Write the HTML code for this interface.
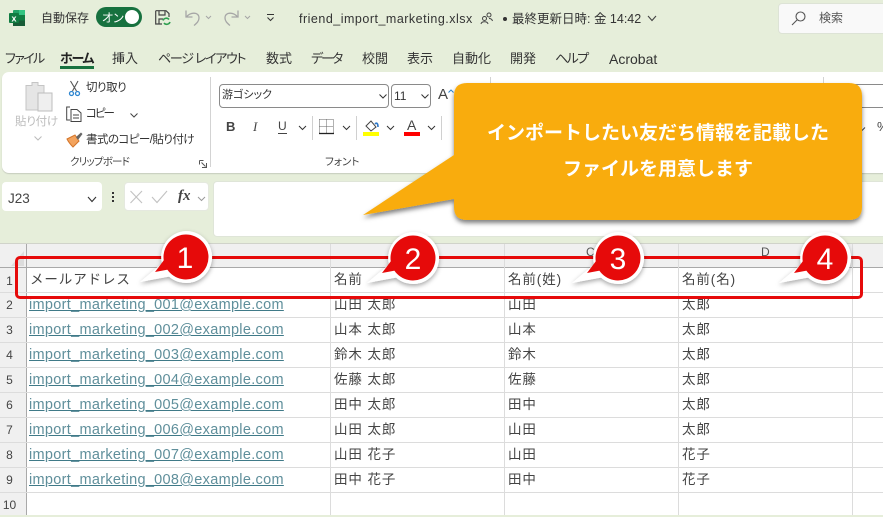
<!DOCTYPE html>
<html lang="ja"><head><meta charset="utf-8"><title>friend_import_marketing.xlsx</title>
<style>
html,body{margin:0;padding:0}
body{width:883px;height:515px;overflow:hidden;position:relative;background:#e6eeda;font-family:"Liberation Sans","Noto Sans CJK JP",sans-serif;color:#333}
.t{position:absolute;white-space:nowrap;line-height:20px;height:20px}
.b{position:absolute;box-sizing:border-box}
.tab{font-size:13px;top:49px;color:#333;font-feature-settings:"palt"}
.rb{font-size:11.5px;color:#333;font-feature-settings:"palt"}
.cell{font-size:13.5px;color:#444;letter-spacing:.9px;line-height:24px;height:24px}
.mail{font-size:14.5px;color:#5f8f9b;text-decoration:underline;text-decoration-color:#3f7a88;letter-spacing:.3px;line-height:24px;height:24px;left:29px}
.rh{position:absolute;left:0;width:19px;text-align:center;font-size:12px;color:#444;line-height:24px;height:24px;box-sizing:border-box}
svg{position:absolute;overflow:visible}
</style></head><body>

<!-- title bar -->
<svg style="left:9px;top:10px" width="17" height="16" viewBox="0 0 17 16"><rect x="4" y="0" width="12" height="16" rx="1" fill="#21a366"/><rect x="10" y="0" width="6" height="5" fill="#33c481"/><rect x="4" y="10.500" width="12" height="5.500" fill="#185c37"/><rect x="10" y="5" width="6" height="5.500" fill="#107c41"/><rect x="0" y="3" width="10" height="10" rx="1" fill="#107c41"/><text x="5" y="11.500" font-size="9" font-weight="700" fill="#fff" text-anchor="middle" font-family="Liberation Sans">x</text></svg>
<div class="t" style="left:41px;top:8px;font-size:12px;color:#333">自動保存</div>
<div class="b" style="left:96px;top:7px;width:46px;height:20px;border-radius:10px;background:#17713f"></div>
<div class="t" style="left:102px;top:8px;font-size:12px;color:#fff;font-feature-settings:'palt'">オン</div>
<div class="b" style="left:125px;top:10px;width:14px;height:14px;border-radius:50%;background:#fff"></div>
<svg style="left:155px;top:10px" width="17" height="16" viewBox="0 0 17 16" fill="none"><path d="M.7.7H11L14 3.500V7M.7.7V14H7M4 .7V5H10V.7M4 14V9H8" stroke="#444" stroke-width="1.200"/><path d="M8 10.500A3.500 3.500 0 0 1 14 9.500M15 12A3.500 3.500 0 0 1 9 13" stroke="#2f9e4f" stroke-width="1.600"/></svg>
<svg style="left:185px;top:9px" width="46" height="18" viewBox="0 0 46 18" fill="none" stroke="#a6a6a6" stroke-width="1.300"><path d="M1 1.500V8H7.500M1.500 8C5 3 14 2.500 14 9C14 12 12 14 9 16.500"/><path d="M21 7L23.500 9.500L26 7" stroke-width="1"/></svg>
<svg style="left:224px;top:9px" width="46" height="18" viewBox="0 0 46 18" fill="none" stroke="#a6a6a6" stroke-width="1.300"><path d="M14 1.500V8H7.500M13.500 8C10 3 1 2.500 1 9C1 12 3 14 6 16.500"/><path d="M21 7L23.500 9.500L26 7" stroke-width="1"/></svg>
<svg style="left:266px;top:14px" width="9" height="8" viewBox="0 0 9 8" fill="none" stroke="#333"><path d="M1 .5H8M1.500 3.500L4.500 6.500L7.500 3.500"/></svg>
<div class="t" style="left:299px;top:9px;font-size:12.500px;letter-spacing:.5px;color:#333">friend_import_marketing.xlsx</div>
<svg style="left:480px;top:12px" width="13" height="13" viewBox="0 0 13 13" fill="none" stroke="#444"><circle cx="9" cy="3" r="2"/><circle cx="4.500" cy="6.500" r="2"/><path d="M1 12C1.500 9 7.500 9 8 12M9 6.500C10.500 6.500 12 7 12.500 9"/></svg>
<div class="b" style="left:503px;top:17px;width:4px;height:4px;border-radius:50%;background:#333"></div>
<div class="t" style="left:512px;top:9px;font-size:12.500px;color:#333">最終更新日時: 金 14:42</div>
<svg style="left:647px;top:15px" width="10" height="7" viewBox="0 0 10 7" fill="none" stroke="#444" stroke-width="1.100"><path d="M1 1L5 5.500L9 1"/></svg>
<div class="b" style="left:778px;top:3px;width:110px;height:31px;border-radius:4px;background:#f9f9f9;border:1px solid #dde3d6"></div>
<svg style="left:791px;top:11px" width="15" height="15" viewBox="0 0 15 15" fill="none" stroke="#555" stroke-width="1.100"><circle cx="9.500" cy="5.500" r="4.500"/><path d="M6 9L1 14"/></svg>
<div class="t" style="left:819px;top:8px;font-size:12px;color:#555">検索</div>

<!-- tabs -->
<div class="t tab" style="left:5px;letter-spacing:-1.600px">ファイル</div>
<div class="t tab" style="left:60px;font-weight:700;color:#222;letter-spacing:-1.300px">ホーム</div>
<div class="b" style="left:60px;top:66px;width:34px;height:3px;background:#17713f"></div>
<div class="t tab" style="left:112px">挿入</div>
<div class="t tab" style="left:158px;letter-spacing:-1.300px">ページ レイアウト</div>
<div class="t tab" style="left:266px">数式</div>
<div class="t tab" style="left:311px;letter-spacing:-2px">データ</div>
<div class="t tab" style="left:362px">校閲</div>
<div class="t tab" style="left:407px">表示</div>
<div class="t tab" style="left:452px">自動化</div>
<div class="t tab" style="left:510px">開発</div>
<div class="t tab" style="left:555px;letter-spacing:-1.600px">ヘルプ</div>
<div class="t tab" style="left:609px;font-size:14px">Acrobat</div>

<!-- ribbon -->
<div class="b" style="left:2px;top:72px;width:890px;height:101px;border-radius:7px;background:#fff;box-shadow:0 1px 1px #c6ccbe"></div>
<div class="b" style="left:210px;top:77px;width:1px;height:90px;background:#d3d3d3"></div>
<div class="b" style="left:490px;top:77px;width:1px;height:90px;background:#d3d3d3"></div>
<div class="b" style="left:823px;top:77px;width:1px;height:90px;background:#d3d3d3"></div>
<svg style="left:25px;top:81px" width="28" height="31" viewBox="0 0 28 31"><path d="M1 4.500H7V1.500H13V4.500H19V29H1Z" fill="#e5e5e5" stroke="#c5c5c5"/><rect x="13" y="12" width="14" height="18" fill="#efefef" stroke="#bdbdbd"/></svg>
<div class="t" style="left:15px;top:112px;font-size:11.500px;color:#bcbcbc;letter-spacing:-.2px;font-feature-settings:'palt'">貼り付け</div>
<svg style="left:34px;top:136px" width="8" height="5" viewBox="0 0 8 5" fill="none" stroke="#bbb"><path d="M.5.5L4 4L7.500.5"/></svg>
<svg style="left:68px;top:80px" width="13" height="17" viewBox="0 0 13 17" fill="none"><path d="M2.500 1L8.500 11M10 1L4.500 11" stroke="#555" stroke-width="1.100"/><circle cx="3.500" cy="13.500" r="2" stroke="#2e86d0" stroke-width="1.300"/><circle cx="9.500" cy="13.500" r="2" stroke="#2e86d0" stroke-width="1.300"/></svg>
<div class="t rb" style="left:86px;top:78px;letter-spacing:-.5px">切り取り</div>
<svg style="left:66px;top:106px" width="16" height="16" viewBox="0 0 16 16" fill="none" stroke="#444"><path d="M4 1H.7V14H4M5 3.500H11L15 7V15.500H5ZM7 9H13M7 12H13"/></svg>
<div class="t rb" style="left:86px;top:104px;letter-spacing:-2px">コピー</div>
<svg style="left:130px;top:113px" width="8" height="5" viewBox="0 0 8 5" fill="none" stroke="#444"><path d="M.5.500L4 4L7.500.5"/></svg>
<svg style="left:66px;top:132px" width="17" height="16" viewBox="0 0 17 16"><path d="M1 7L9 3L13 9L7 15C5 13 2 9 1 7Z" fill="#f3a35d" stroke="#d4752a"/><path d="M10 5L15 0.500L16.500 2L12 8Z" fill="#666"/></svg>
<div class="t rb" style="left:86px;top:130px;letter-spacing:-.55px">書式のコピー/貼り付け</div>
<div class="t" style="left:70px;top:152px;font-size:10.500px;color:#444;letter-spacing:-.8px;font-feature-settings:'palt'">クリップボード</div>
<svg style="left:199px;top:160px" width="8" height="8" viewBox="0 0 8 8" fill="none" stroke="#555"><path d="M7.500 3V7.500H3M.5.500H4.500M.5.500V4.500M2.500 2.500L6.500 6.500"/></svg>

<div class="b" style="left:219px;top:84px;width:170px;height:24px;border:1px solid #8a8a8a;border-radius:4px"></div>
<div class="t" style="left:222px;top:85px;font-size:11px;color:#333;font-feature-settings:'palt'">游ゴシック</div>
<svg style="left:379px;top:94px" width="8" height="5" viewBox="0 0 8 5" fill="none" stroke="#333"><path d="M.5.500L4 4L7.500.5"/></svg>
<div class="b" style="left:391px;top:84px;width:40px;height:24px;border:1px solid #8a8a8a;border-radius:4px"></div>
<div class="t" style="left:394px;top:86px;font-size:12px">11</div>
<svg style="left:421px;top:94px" width="8" height="5" viewBox="0 0 8 5" fill="none" stroke="#333"><path d="M.5.500L4 4L7.500.5"/></svg>
<div class="t" style="left:438px;top:85px;font-size:15px;color:#444">A</div>
<svg style="left:448px;top:89px" width="6" height="4" viewBox="0 0 6 4" fill="none" stroke="#2e86d0"><path d="M.5 3.500L3 1L5.500 3.500"/></svg>

<div class="t" style="left:226px;top:117px;font-size:13px;font-weight:700;color:#444">B</div>
<div class="t" style="left:253px;top:117px;font-size:13px;font-style:italic;font-family:'Liberation Serif',serif;color:#444">I</div>
<div class="t" style="left:278px;top:116px;font-size:12px;color:#444">U</div>
<div class="b" style="left:278px;top:133px;width:9px;height:1px;background:#444"></div>
<svg style="left:298px;top:125px" width="9" height="6" viewBox="0 0 9 6" fill="none" stroke="#333"><path d="M1 1L4.500 4.500L8 1"/></svg>
<div class="b" style="left:312px;top:116px;width:1px;height:24px;background:#d0d0d0"></div>
<svg style="left:319px;top:119px" width="15" height="16" viewBox="0 0 15 16" fill="none"><path d="M.5.500H14.500V14M.5.500V14M7.500.500V14M.5 7.500H14.500" stroke="#666" stroke-dasharray="1 1"/><path d="M0 14.500H15" stroke="#222" stroke-width="1.300"/></svg>
<svg style="left:342px;top:125px" width="9" height="6" viewBox="0 0 9 6" fill="none" stroke="#333"><path d="M1 1L4.500 4.500L8 1"/></svg>
<div class="b" style="left:356px;top:116px;width:1px;height:24px;background:#d0d0d0"></div>
<svg style="left:365px;top:120px" width="14" height="13" viewBox="0 0 14 13" fill="none"><path d="M1 6L6 1L11 7L6 11Z" stroke="#444"/><path d="M10 4C12 2 13 4 13 7" stroke="#2e78c8" stroke-width="1.600"/></svg>
<div class="b" style="left:363px;top:132px;width:16px;height:4px;background:#ffff00"></div>
<svg style="left:386px;top:125px" width="9" height="6" viewBox="0 0 9 6" fill="none" stroke="#333"><path d="M1 1L4.500 4.500L8 1"/></svg>
<div class="t" style="left:407px;top:115px;font-size:14px;color:#444">A</div>
<div class="b" style="left:404px;top:132px;width:16px;height:4px;background:#ff0000"></div>
<svg style="left:427px;top:125px" width="9" height="6" viewBox="0 0 9 6" fill="none" stroke="#333"><path d="M1 1L4.500 4.500L8 1"/></svg>
<div class="b" style="left:441px;top:116px;width:1px;height:24px;background:#d0d0d0"></div>
<div class="t" style="left:325px;top:152px;font-size:10.500px;color:#444;font-feature-settings:'palt'">フォント</div>
<div class="b" style="left:840px;top:84px;width:60px;height:24px;border:1px solid #8a8a8a"></div>
<svg style="left:862px;top:127px" width="6" height="4" viewBox="0 0 6 4" fill="none" stroke="#444"><path d="M0 3.500L3 .5"/></svg>
<div class="t" style="left:877px;top:117px;font-size:13px;color:#444">%</div>

<!-- formula bar -->
<div class="b" style="left:2px;top:182px;width:100px;height:29px;border-radius:4px;background:#fff"></div>
<div class="t" style="left:8px;top:189px;font-size:13.500px;color:#444">J23</div>
<svg style="left:87px;top:196px" width="10" height="7" viewBox="0 0 10 7" fill="none" stroke="#333" stroke-width="1.100"><path d="M1 1L5 5.500L9 1"/></svg>
<div class="b" style="left:112px;top:192px;width:2px;height:2px;background:#333;box-shadow:0 4px #333,0 8px #333"></div>
<div class="b" style="left:124px;top:182px;width:85px;height:29px;border-radius:4px;background:#fff;border:1px solid #e5e9df"></div>
<svg style="left:130px;top:190px" width="40" height="14" viewBox="0 0 40 14" fill="none" stroke="#c2c2c2" stroke-width="1.100"><path d="M.5 1L12 13M12 1L.5 13M22 7L27 12.500L37 1"/></svg>
<div class="t" style="left:178px;top:186px;font-family:'Liberation Serif',serif;font-style:italic;font-weight:700;font-size:15px;color:#444">fx</div>
<svg style="left:197px;top:196px" width="9" height="6" viewBox="0 0 9 6" fill="none" stroke="#999"><path d="M1 1L4.500 4.500L8 1"/></svg>
<div class="b" style="left:213px;top:181px;width:680px;height:56px;border-radius:4px;background:#fff;border:1px solid #dfe5d8"></div>

<!-- grid -->
<div class="b" style="left:0;top:244px;width:883px;height:271px;background:#fff"></div>
<div class="b" style="left:0;top:244px;width:883px;height:23px;background:#f0f0f0"></div>
<div class="b" style="left:0;top:267px;width:26px;height:248px;background:#f0f0f0"></div>
<div class="b" style="left:0;top:243px;width:883px;height:1px;background:#d0d3ca"></div>
<svg style="left:11px;top:251px" width="13" height="15"><path d="M13 0V15H0Z" fill="#dcdcdc"/></svg>
<div class="b" style="left:0;top:267px;width:883px;height:1px;background:#a9a9a9"></div>
<div class="b" style="left:26px;top:244px;width:1px;height:271px;background:#a9a9a9"></div>
<div class="b" style="left:330px;top:244px;width:1px;height:271px;background:#dcdcdc"></div>
<div class="b" style="left:504px;top:244px;width:1px;height:271px;background:#dcdcdc"></div>
<div class="b" style="left:678px;top:244px;width:1px;height:271px;background:#dcdcdc"></div>
<div class="b" style="left:852px;top:244px;width:1px;height:271px;background:#dcdcdc"></div>
<div class="b" style="left:0;top:292px;width:883px;height:1px;background:#dcdcdc"></div>
<div class="b" style="left:0;top:317px;width:883px;height:1px;background:#dcdcdc"></div>
<div class="b" style="left:0;top:342px;width:883px;height:1px;background:#dcdcdc"></div>
<div class="b" style="left:0;top:367px;width:883px;height:1px;background:#dcdcdc"></div>
<div class="b" style="left:0;top:392px;width:883px;height:1px;background:#dcdcdc"></div>
<div class="b" style="left:0;top:417px;width:883px;height:1px;background:#dcdcdc"></div>
<div class="b" style="left:0;top:442px;width:883px;height:1px;background:#dcdcdc"></div>
<div class="b" style="left:0;top:467px;width:883px;height:1px;background:#dcdcdc"></div>
<div class="b" style="left:0;top:492px;width:883px;height:1px;background:#dcdcdc"></div>
<div class="t" style="left:586px;top:242px;font-size:12px;color:#555">C</div>
<div class="t" style="left:761px;top:242px;font-size:12px;color:#555">D</div>

<div class="rh" style="top:269px">1</div><div class="rh" style="top:293px">2</div><div class="rh" style="top:318px">3</div><div class="rh" style="top:343px">4</div><div class="rh" style="top:368px">5</div><div class="rh" style="top:393px">6</div><div class="rh" style="top:418px">7</div><div class="rh" style="top:443px">8</div><div class="rh" style="top:468px">9</div><div class="rh" style="top:493px">10</div>

<div class="t cell" style="left:30px;top:268px">メールアドレス</div>
<div class="t cell" style="left:334px;top:268px">名前</div>
<div class="t cell" style="left:508px;top:268px">名前(姓)</div>
<div class="t cell" style="left:682px;top:268px">名前(名)</div>

<div class="t mail" style="top:293px">import_marketing_001@example.com</div><div class="t cell" style="left:334px;top:293px">山田 太郎</div><div class="t cell" style="left:508px;top:293px">山田</div><div class="t cell" style="left:682px;top:293px">太郎</div>
<div class="t mail" style="top:318px">import_marketing_002@example.com</div><div class="t cell" style="left:334px;top:318px">山本 太郎</div><div class="t cell" style="left:508px;top:318px">山本</div><div class="t cell" style="left:682px;top:318px">太郎</div>
<div class="t mail" style="top:343px">import_marketing_003@example.com</div><div class="t cell" style="left:334px;top:343px">鈴木 太郎</div><div class="t cell" style="left:508px;top:343px">鈴木</div><div class="t cell" style="left:682px;top:343px">太郎</div>
<div class="t mail" style="top:368px">import_marketing_004@example.com</div><div class="t cell" style="left:334px;top:368px">佐藤 太郎</div><div class="t cell" style="left:508px;top:368px">佐藤</div><div class="t cell" style="left:682px;top:368px">太郎</div>
<div class="t mail" style="top:393px">import_marketing_005@example.com</div><div class="t cell" style="left:334px;top:393px">田中 太郎</div><div class="t cell" style="left:508px;top:393px">田中</div><div class="t cell" style="left:682px;top:393px">太郎</div>
<div class="t mail" style="top:418px">import_marketing_006@example.com</div><div class="t cell" style="left:334px;top:418px">山田 太郎</div><div class="t cell" style="left:508px;top:418px">山田</div><div class="t cell" style="left:682px;top:418px">太郎</div>
<div class="t mail" style="top:443px">import_marketing_007@example.com</div><div class="t cell" style="left:334px;top:443px">山田 花子</div><div class="t cell" style="left:508px;top:443px">山田</div><div class="t cell" style="left:682px;top:443px">花子</div>
<div class="t mail" style="top:468px">import_marketing_008@example.com</div><div class="t cell" style="left:334px;top:468px">田中 花子</div><div class="t cell" style="left:508px;top:468px">田中</div><div class="t cell" style="left:682px;top:468px">花子</div>

<!-- red outline -->
<div class="b" style="left:15px;top:256px;width:848px;height:43px;border:3px solid #e60a0a;border-radius:5px"></div>

<!-- callout + numbered pins -->
<svg style="left:0;top:0" width="883" height="515" viewBox="0 0 883 515">
<defs>
<filter id="s" x="-20%" y="-20%" width="140%" height="140%"><feDropShadow dx="0" dy="3" stdDeviation="2.500" flood-color="#000" flood-opacity=".5"/></filter>
<filter id="p" x="-40%" y="-40%" width="180%" height="180%"><feDropShadow dx="0" dy="2" stdDeviation="2.500" flood-color="#000" flood-opacity=".35"/></filter>
</defs>
<path filter="url(#s)" fill="#f9ac0a" d="M467 83H849Q862 83 862 96V207Q862 220 849 220H467Q454 220 454 207V199L363 215L454 155V96Q454 83 467 83Z"/>
<g transform="translate(186 257)"><path filter="url(#p)" fill="#fff" d="M0 -26A26 26 0 1 1 -17 19.600L-46 25L-24 6.500A26 26 0 0 1 0 -26Z"/><circle r="22.500" fill="#e60a0a"/><path fill="#e60a0a" d="M-22 3L-31 15L-15 12Z"/></g>
<g transform="translate(413 258)"><path filter="url(#p)" fill="#fff" d="M0 -26A26 26 0 1 1 -17 19.600L-46 25L-24 6.500A26 26 0 0 1 0 -26Z"/><circle r="22.500" fill="#e60a0a"/><path fill="#e60a0a" d="M-22 3L-31 15L-15 12Z"/></g>
<g transform="translate(618 258)"><path filter="url(#p)" fill="#fff" d="M0 -26A26 26 0 1 1 -17 19.600L-46 25L-24 6.500A26 26 0 0 1 0 -26Z"/><circle r="22.500" fill="#e60a0a"/><path fill="#e60a0a" d="M-22 3L-31 15L-15 12Z"/></g>
<g transform="translate(825 258)"><path filter="url(#p)" fill="#fff" d="M0 -26A26 26 0 1 1 -17 19.600L-46 25L-24 6.500A26 26 0 0 1 0 -26Z"/><circle r="22.500" fill="#e60a0a"/><path fill="#e60a0a" d="M-22 3L-31 15L-15 12Z"/></g>
<g font-family="Liberation Sans" font-size="30" fill="#fff" text-anchor="middle"><text x="185" y="268">1</text><text x="413" y="269">2</text><text x="618" y="269">3</text><text x="825" y="269">4</text></g>
</svg>
<div class="t" style="left:454px;width:408px;top:124px;text-align:center;font-size:19px;font-weight:700;color:#fff">インポートしたい友だち情報を記載した</div>
<div class="t" style="left:454px;width:408px;top:160px;text-align:center;font-size:19px;font-weight:700;color:#fff">ファイルを用意します</div>
</body></html>
